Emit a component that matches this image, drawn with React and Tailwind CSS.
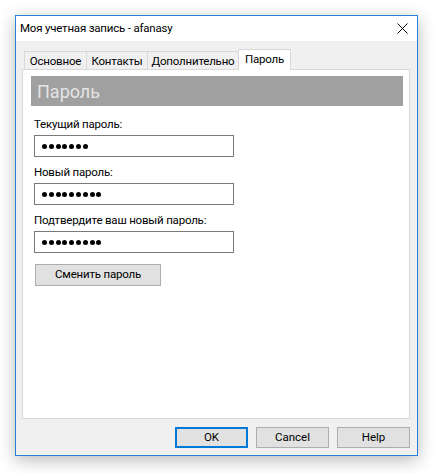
import React from 'react';

const font = { fontFamily: 'Roboto, "Liberation Sans", sans-serif' };

const Dots = ({ n }) => (
  <div className="flex items-center gap-[1.8px] h-full pl-[7px]">
    {Array.from({ length: n }).map((_, i) => (
      <span key={i} className="block w-[5px] h-[5px] rounded-full bg-black" />
    ))}
  </div>
);

const Field = ({ label, n, first }) => (
  <div className={first ? 'mt-[11px]' : 'mt-[8px]'}>
    <div className="text-[11.5px] tracking-[-0.2px] leading-[14px] text-black ml-[3px]">{label}</div>
    <div className="mt-[4px] ml-[3px] w-[200px] h-[22px] border border-[#7a7a7a] bg-white">
      <Dots n={n} />
    </div>
  </div>
);

const Tab = ({ children, active, w }) =>
  active ? (
    <div className={'h-[21px] bg-white border border-b-0 border-[#d9d9d9] -ml-px -mb-px relative z-10 text-[11.5px] tracking-[-0.2px] leading-[18px] text-center ' + w}>
      {children}
    </div>
  ) : (
    <div className={'h-[18px] bg-[#f0f0f0] border border-b-0 border-[#d9d9d9] -ml-px first:ml-0 text-[11.5px] tracking-[-0.2px] leading-[18px] text-center ' + w}>
      {children}
    </div>
  );

const Btn = ({ children, primary }) => (
  <div
    className={
      'w-[73px] h-[21px] flex items-center justify-center text-[11.5px] bg-[#e1e1e1] ' +
      (primary ? 'border-2 border-[#0078d7]' : 'border border-[#adadad]')
    }
  >
    {children}
  </div>
);

export default function App() {
  return (
    <div className="w-[435px] h-[474px] bg-white pt-[15px] pl-[15px]" style={font}>
      <div className="w-[403px] h-[441px] border border-[#2b7fd6] bg-[#f0f0f0] flex flex-col shadow-[0_4px_16px_rgba(0,0,0,0.28)]">
        <div className="h-[25px] bg-white flex items-center justify-between pl-[4px] pr-[9px]">
          <span className="text-[11.5px] tracking-[-0.2px] text-black">Моя учетная запись - afanasy</span>
          <svg width="11" height="11" viewBox="0 0 11 11">
            <path d="M0.5 0.5 L10.5 10.5 M10.5 0.5 L0.5 10.5" stroke="#000" strokeWidth="1" />
          </svg>
        </div>
        <div className="flex-1 flex flex-col pl-[6px] pr-[7px] pt-[7px]">
          <div className="flex items-end pl-[2px] h-[21px]">
            <Tab w="w-[63px]">Основное</Tab>
            <Tab w="w-[62px]">Контакты</Tab>
            <Tab w="w-[92px]">Дополнительно</Tab>
            <Tab active w="w-[53px]">Пароль</Tab>
          </div>
          <div className="h-[350px] bg-white border border-[#d9d9d9] pt-[6px] px-[8px] pr-[6px]">
            <div className="h-[30px] bg-[#a0a0a0] flex items-center pl-[6px]">
              <span className="text-[18px] text-[#e4e4e4]">Пароль</span>
            </div>
            <Field first label="Текущий пароль:" n={7} />
            <Field label="Новый пароль:" n={9} />
            <Field label="Подтвердите ваш новый пароль:" n={9} />
            <div className="mt-[11px] ml-[4px] w-[126px] h-[22px] bg-[#e1e1e1] border border-[#adadad] flex items-center justify-center text-[11.5px] tracking-[-0.2px]">
              Сменить пароль
            </div>
          </div>
          <div className="flex justify-end gap-[8px] mt-[8px]">
            <Btn primary>OK</Btn>
            <Btn>Cancel</Btn>
            <Btn>Help</Btn>
          </div>
        </div>
      </div>
    </div>
  );
}
